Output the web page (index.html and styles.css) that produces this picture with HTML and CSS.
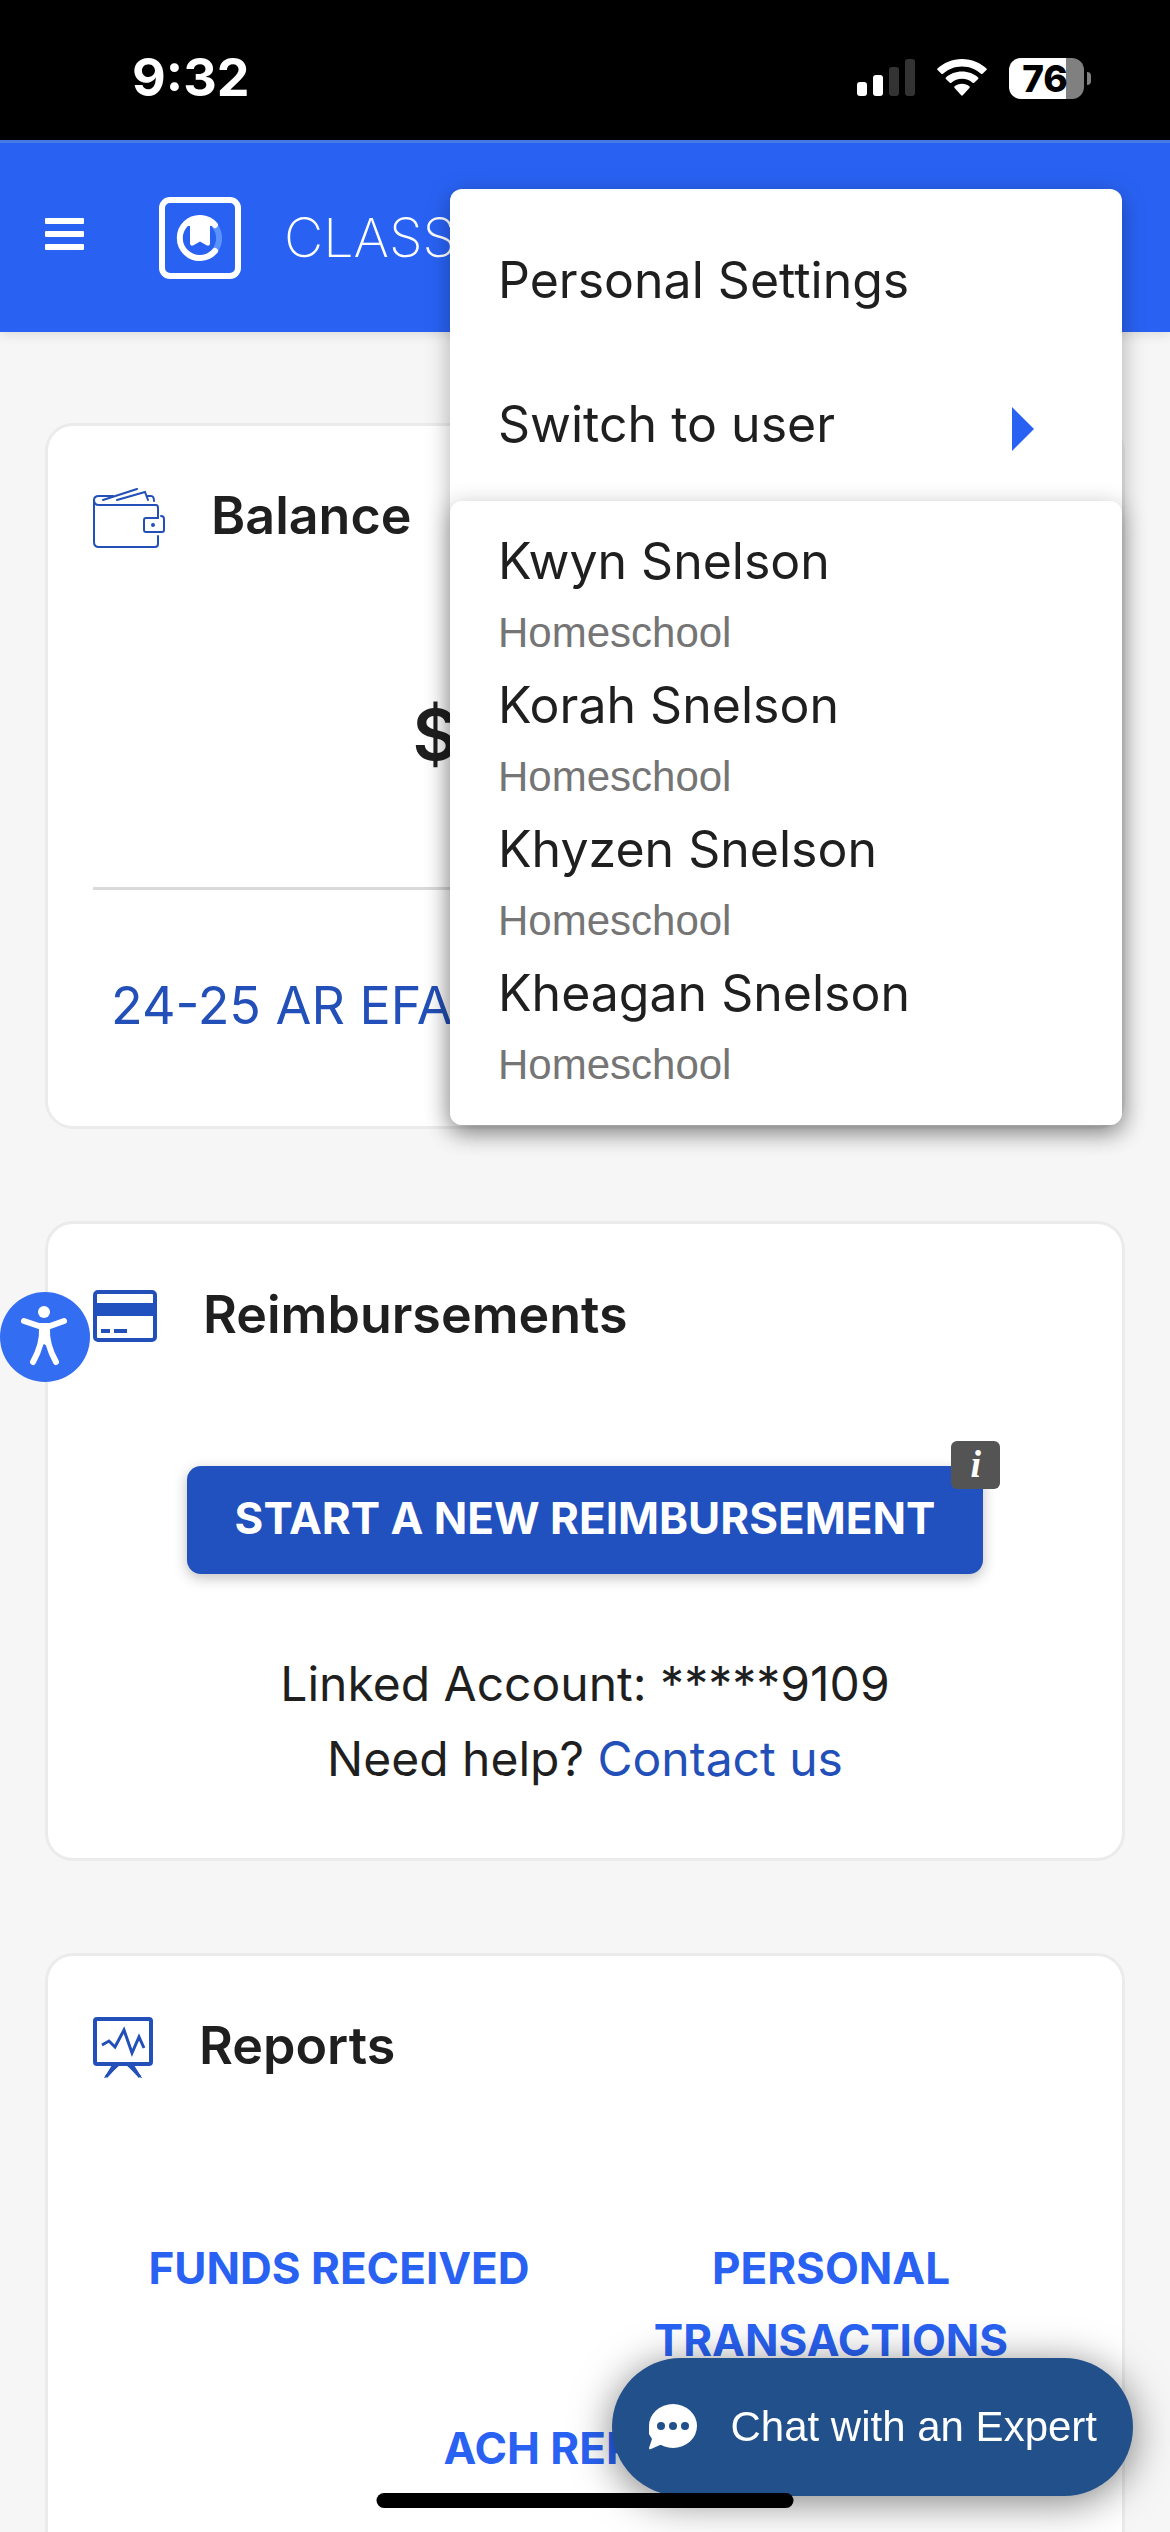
FILE: index.html
```html
<!DOCTYPE html>
<html lang="en">
<head>
    <meta charset="UTF-8">
    <meta name="viewport" content="width=device-width, initial-scale=1.0">
    <title>ClassWallet</title>
    <link rel="stylesheet" href="styles.css">
</head>
<body>
<div class="status-bar">
    <span class="clock">9:32</span>
    <div class="status-icons">
        <svg width="58" height="38" viewBox="0 0 58 38">
            <rect x="0" y="23" width="10" height="14" rx="3" fill="#fff"/>
            <rect x="16" y="16" width="10" height="21" rx="3" fill="#fff"/>
            <rect x="32" y="8" width="10" height="29" rx="3" fill="#333"/>
            <rect x="48" y="0" width="10" height="37" rx="3" fill="#333"/>
        </svg>
        <svg width="50" height="38" viewBox="0 0 50 38" fill="#fff">
            <path d="M25 0C15.200 0 6.500 3.900 0.500 9.500Q-0.200 10.300 0.600 11L4.400 14.700Q5.200 15.400 6 14.700C11 10.200 17.700 7.400 25 7.400S39 10.200 44 14.700Q44.800 15.400 45.600 14.700L49.400 11Q50.200 10.300 49.500 9.500C43.500 3.900 34.800 0 25 0Z"/>
            <path d="M25 12.500C18.700 12.500 13 14.800 8.900 18.400Q8.100 19.200 8.900 20L12.800 23.700Q13.600 24.300 14.400 23.700C17.200 21.200 21 19.800 25 19.800S32.800 21.200 35.600 23.700Q36.400 24.300 37.200 23.700L41.100 20Q41.900 19.200 41.100 18.400C37 14.800 31.300 12.500 25 12.500Z"/>
            <path d="M25 24.800C22.200 24.800 19.600 25.700 17.600 27.300Q16.800 28.100 17.600 28.900L24.200 36.300Q25 37.100 25.800 36.300L32.400 28.900Q33.200 28.100 32.400 27.300C30.400 25.700 27.800 24.800 25 24.800Z"/>
        </svg>
        <div class="battery"><span class="battery-level">76</span></div>
    </div>
</div>

<header class="topbar">
    <button class="menu-toggle" aria-label="Menu">
        <svg width="39" height="32" viewBox="0 0 39 32" fill="#fff">
            <rect width="39" height="6" rx="1"/>
            <rect y="13" width="39" height="6" rx="1"/>
            <rect y="26" width="39" height="6" rx="1"/>
        </svg>
    </button>
    <svg class="logo" width="82" height="82" viewBox="0 0 82 82" fill="none">
        <rect x="3" y="3" width="76" height="76" rx="8" stroke="#fff" stroke-width="6"/>
        <path d="M55.500 28.500A20 20 0 0 1 55.500 54" stroke="#5b93fb" stroke-width="6"/>
        <path d="M56 28A20 20 0 1 0 56 54" stroke="#fff" stroke-width="6" stroke-linecap="round"/>
        <path d="M32 21Q41 16 50 21L57 28L51 29V47Q50 50 47 48L41 44.500L35 48Q32 50 31 47V29L26 29Z" fill="#fff"/>
    </svg>
    <span class="brand">CLASSWALLET</span>

    <nav class="user-menu">
        <a class="menu-item" href="#">Personal Settings</a>
        <a class="menu-item" href="#">Switch to user
            <svg width="22" height="44" viewBox="0 0 22 44"><path d="M0 0L22 22L0 44Z" fill="#2962f3"/></svg>
        </a>
        <ul class="user-list">
            <li><a href="#">Kwyn Snelson<small>Homeschool</small></a></li>
            <li><a href="#">Korah Snelson<small>Homeschool</small></a></li>
            <li><a href="#">Khyzen Snelson<small>Homeschool</small></a></li>
            <li><a href="#">Kheagan Snelson<small>Homeschool</small></a></li>
        </ul>
    </nav>
</header>

<main>
    <section class="card balance">
        <div class="card-title">
            <svg width="72" height="60" viewBox="0 0 72 60" fill="none" stroke="#2350b8" stroke-width="2" stroke-linecap="round">
                <path d="M65 30V20Q65 17 63 17H6Q1 17 1 12Q1 8 6 8H20M1 12V54Q1 59 6 59H62Q65 59 65 56V48"/>
                <path d="M10 12L44 1M24 12L52 4L55 12M55 8H58Q61 8 61 13"/>
                <path d="M65 30H53Q51 30 51 32V42Q51 44 53 44H69Q71 44 71 42V31Q71 28 68 28"/>
                <circle cx="60" cy="37" r="1" fill="#2350b8"/>
            </svg>
            <h2>Balance</h2>
        </div>
        <p class="amount">$1,000.00</p>
        <hr>
        <a class="program" href="#">24-25 AR EFA</a>
    </section>

    <section class="card reimbursements">
        <div class="card-title">
            <svg width="64" height="52" viewBox="0 0 64 52">
                <rect x="2" y="2" width="60" height="48" rx="3" fill="#fff" stroke="#2350b8" stroke-width="4"/>
                <rect x="2" y="13" width="60" height="13" fill="#2150bf"/>
                <path d="M8 41H17M21 41H34" stroke="#2350b8" stroke-width="4"/>
            </svg>
            <h2>Reimbursements</h2>
        </div>
        <div class="action">
            <button class="primary">START A NEW REIMBURSEMENT</button>
            <span class="info">i</span>
        </div>
        <p>Linked Account: *****9109</p>
        <p>Need help? <a href="#">Contact us</a></p>
    </section>

    <section class="card reports">
        <div class="card-title">
            <svg width="60" height="62" viewBox="0 0 60 62" fill="none" stroke="#2350b8" stroke-width="4">
                <rect x="2" y="2" width="56" height="45" rx="2"/>
                <path d="M9 28L16 24L22 30L31 13L39 36L46 20L51 31" stroke-width="3"/>
                <path d="M19 48H27L12 61H11ZM33 48H41L49 61H48Z" fill="#2350b8" stroke="none"/>
                <path d="M24 48L13 60M36 48L47 60" stroke-width="3"/>
            </svg>
            <h2>Reports</h2>
        </div>
        <div class="report-links">
            <a href="#">FUNDS RECEIVED</a>
            <a href="#">PERSONAL TRANSACTIONS</a>
            <a class="wide" href="#">ACH REPORT</a>
        </div>
    </section>
</main>

<button class="accessibility" aria-label="Accessibility">
    <svg width="90" height="90" viewBox="0 0 90 90" fill="#fff">
        <circle cx="44" cy="20" r="6"/>
        <path d="M24 29L39 34H50L64 29M42 36Q43 52 33 70M47 36Q46 52 56 70" fill="none" stroke="#fff" stroke-width="6" stroke-linecap="round"/>
        <path d="M39 33H50Q48 46 50 56L44 52L39 56Q41 46 39 33Z"/>
    </svg>
</button>

<button class="chat">
    <svg width="50" height="46" viewBox="0 0 50 46">
        <ellipse cx="25" cy="22" rx="24" ry="22" fill="#fff"/>
        <path d="M1 22V30L4 35L1 44Q1 46 3 45L12 41L20 40Z" fill="#fff"/>
        <g fill="#21508a"><circle cx="13" cy="22" r="4"/><circle cx="25" cy="22" r="4"/><circle cx="37" cy="22" r="4"/></g>
    </svg>
    Chat with an Expert
</button>
<div class="home-indicator"></div>
</body>
</html>
```
FILE: styles.css
```css
* {
    box-sizing: border-box;
}

html {
    height: 100%;
    overflow: hidden;
}

body {
    margin: 0;
    height: 100%;
    overflow: hidden;
    background-color: #f6f6f6;
    color: #1f1f1f;
    font-family: Inter, "Liberation Sans", sans-serif;
    font-size: 48px;
    line-height: 72px;
}

a {
    color: #2350b8;
    text-decoration: none;
}

button {
    border: none;
    font-family: inherit;
    cursor: pointer;
}

svg {
    display: block;
    flex-shrink: 0;
}

h2,
p {
    margin: 0;
}

.status-bar {
    display: flex;
    justify-content: space-between;
    align-items: center;
    height: 140px;
    padding: 16px 86px 0 132px;
    background-color: #000;
    color: #fff;
}

.clock {
    font-size: 52px;
    font-weight: 700;
}

.status-icons {
    display: flex;
    align-items: center;
    gap: 22px;
}

.battery {
    position: relative;
    width: 75px;
    height: 41px;
    border-radius: 12px;
    background: linear-gradient(90deg, #fff 76%, #808080 76%);
    color: #000;
}

.battery::after {
    content: "";
    position: absolute;
    top: 14px;
    right: -7px;
    width: 4px;
    height: 13px;
    border-radius: 0 4px 4px 0;
    background-color: #808080;
}

.battery-level {
    display: block;
    padding-right: 3px;
    font-size: 37px;
    font-weight: 800;
    line-height: 41px;
    text-align: center;
}

.topbar {
    position: relative;
    z-index: 2;
    display: flex;
    align-items: center;
    height: 192px;
    padding-left: 45px;
    background-color: #2962f3;
    border-top: 3px solid #4678e6;
    box-shadow: 0 2px 12px rgba(0, 0, 0, 0.12);
}

.menu-toggle {
    padding: 0 0 8px;
    margin-right: 75px;
    background: none;
}

.brand {
    margin-left: 43px;
    color: #fff;
    font-size: 54px;
    font-weight: 200;
}

.user-menu {
    position: absolute;
    top: 46px;
    right: 48px;
    width: 672px;
    padding-top: 24px;
    border-radius: 12px;
    background-color: #fff;
    box-shadow: 0 6px 24px rgba(0, 0, 0, 0.3);
    font-size: 50px;
}

.menu-item {
    display: flex;
    justify-content: space-between;
    align-items: center;
    height: 144px;
    padding: 0 88px 10px 48px;
    color: #1f1f1f;
}

.menu-item svg {
    margin-top: 10px;
}

.user-list {
    margin: 0;
    padding: 24px 48px;
    list-style: none;
    border-radius: 12px;
    background-color: #fff;
    box-shadow: 0 6px 24px rgba(0, 0, 0, 0.3);
}

.user-list a {
    display: block;
    color: #1f1f1f;
}

.user-list small {
    display: block;
    color: #757575;
    font-family: "Liberation Sans", sans-serif;
    font-size: 42px;
}

main {
    display: flex;
    flex-direction: column;
    gap: 92px;
    padding: 91px 45px 0;
}

.card {
    padding: 53px 45px 62px;
    border: 3px solid #ebebeb;
    border-radius: 28px;
    background-color: #fff;
}

.card-title {
    display: flex;
    align-items: center;
    gap: 46px;
    height: 78px;
}

.card-title h2 {
    padding-bottom: 4px;
    font-size: 52px;
    font-weight: 600;
}

.amount {
    margin: 124px 0 98px;
    font-size: 70px;
    font-weight: 600;
    line-height: 108px;
    text-align: center;
}

hr {
    height: 3px;
    margin: 0 0 80px;
    border: none;
    background-color: #dadada;
}

.program {
    display: block;
    padding: 0 18px 22px;
    font-size: 52px;
}

.reimbursements {
    line-height: 75px;
    text-align: center;
}

.action {
    position: relative;
    width: fit-content;
    margin: 111px auto 72px;
}

.primary {
    display: block;
    height: 108px;
    padding: 0 48px 4px;
    border-radius: 14px;
    background-color: #2150bf;
    box-shadow: 0 4px 14px rgba(0, 0, 0, 0.25);
    color: #fff;
    font-size: 44px;
    font-weight: 700;
}

.info {
    position: absolute;
    top: -25px;
    right: -17px;
    width: 49px;
    height: 48px;
    border-radius: 6px;
    background-color: #545454;
    color: #fff;
    font-family: "Liberation Serif", serif;
    font-size: 38px;
    font-style: italic;
    font-weight: 700;
    line-height: 46px;
}

.reports {
    padding-bottom: 120px;
}

.report-links {
    display: grid;
    grid-template-columns: 1fr 1fr;
    row-gap: 36px;
    margin-top: 145px;
    text-align: center;
}

.report-links a {
    color: #2962f3;
    font-size: 44px;
    font-weight: 700;
}

.report-links .wide {
    grid-column: 1 / 3;
}

.accessibility {
    position: fixed;
    top: 1292px;
    left: 0;
    z-index: 3;
    padding: 0;
    border-radius: 50%;
    background-color: #336df2;
}

.chat {
    position: fixed;
    right: 37px;
    bottom: 36px;
    z-index: 3;
    display: flex;
    align-items: center;
    gap: 32px;
    height: 138px;
    padding: 0 36px;
    border-radius: 69px;
    background-color: #21508a;
    box-shadow: 0 6px 40px rgba(0, 0, 0, 0.5);
    color: #fff;
    font-family: "Liberation Sans", sans-serif;
    font-size: 42px;
}

.home-indicator {
    position: fixed;
    bottom: 24px;
    left: 50%;
    z-index: 4;
    width: 417px;
    height: 15px;
    border-radius: 8px;
    background-color: #000;
    transform: translateX(-50%);
}
```
